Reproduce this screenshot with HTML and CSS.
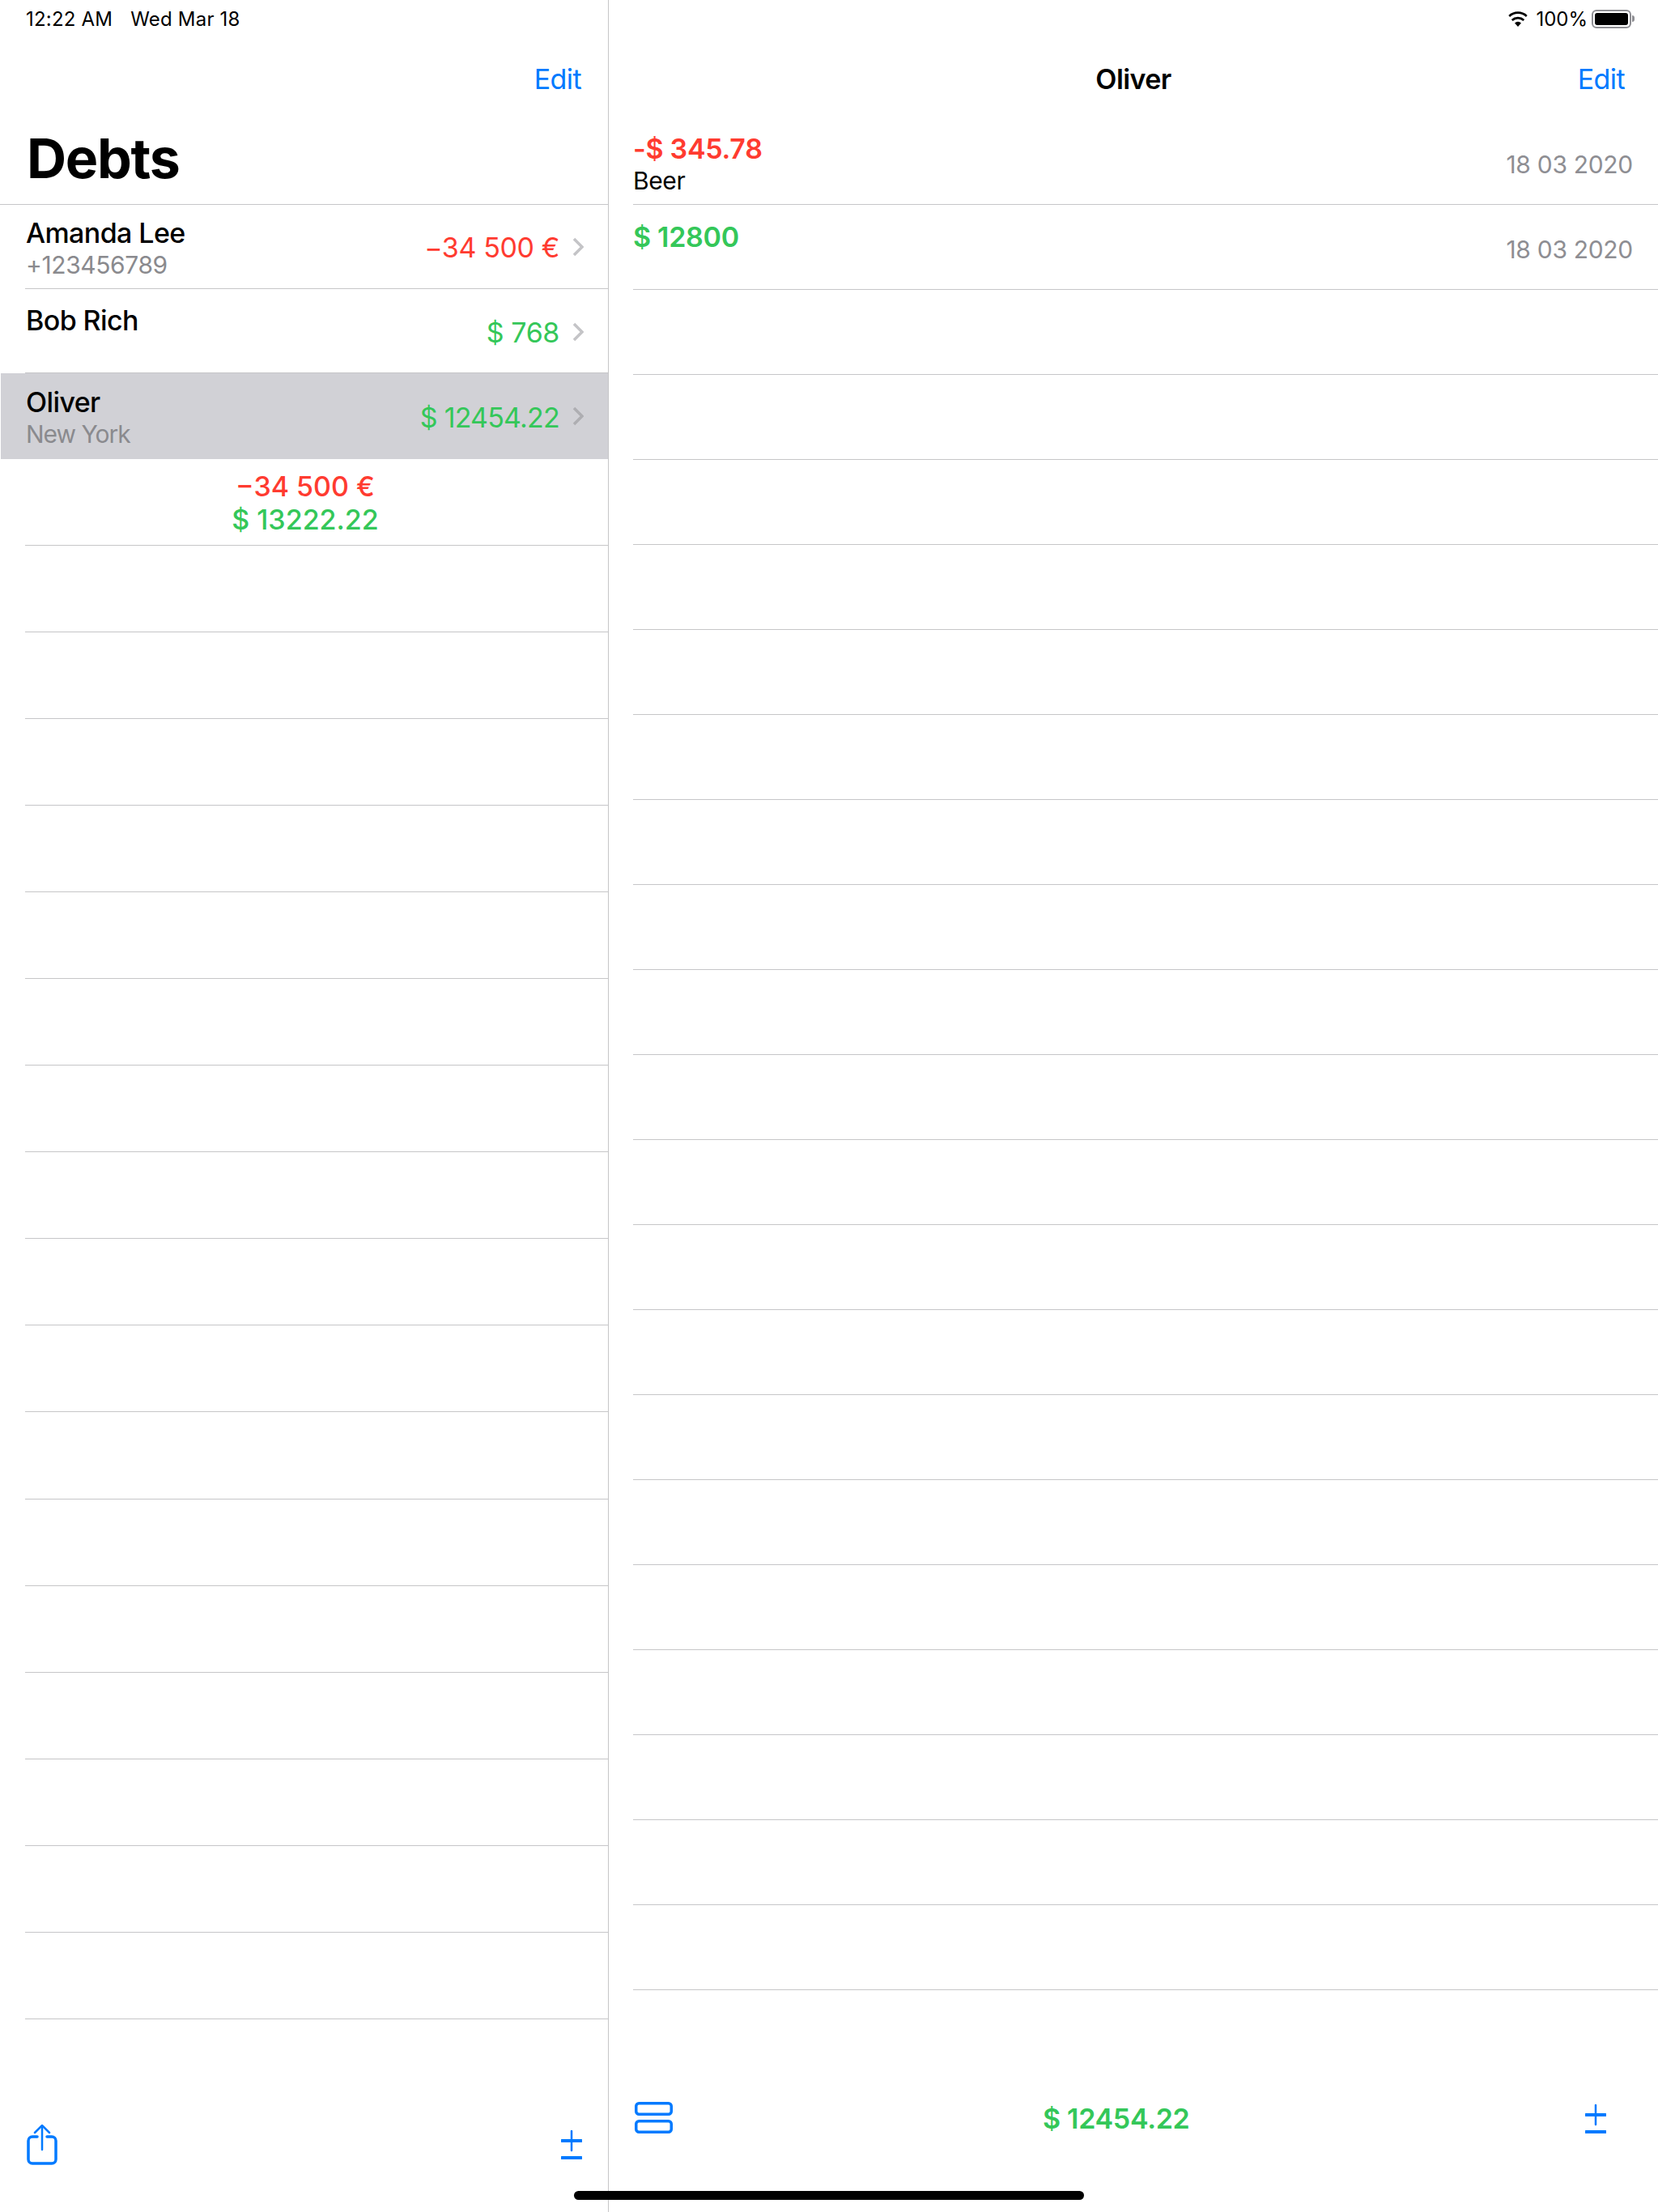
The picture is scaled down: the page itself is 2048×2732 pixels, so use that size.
FILE: index.html
```html
<!DOCTYPE html>
<html lang="en">
<head>
<meta charset="utf-8">
<title>Debts</title>
<link rel="stylesheet" href="styles.css">
</head>
<body>
<div class="app">
  <section class="pane pane-master">
    <div class="status"><span class="time">12:22 AM</span><span class="date">Wed Mar 18</span></div>
    <div class="nav nav-master"><a class="edit">Edit</a></div>
    <h1 class="title">Debts</h1>
    <div class="list list-master">
      <div class="person person-first">
        <div class="person-text"><div class="name">Amanda Lee</div><div class="sub">+123456789</div></div>
        <div class="amount red">−34 500 €</div>
        <svg class="chev" viewBox="0 0 14 24"><path d="M2 2l10 10L2 22"/></svg>
      </div>
      <div class="person person-single">
        <div class="person-text"><div class="name">Bob Rich</div></div>
        <div class="amount green">$ 768</div>
        <svg class="chev" viewBox="0 0 14 24"><path d="M2 2l10 10L2 22"/></svg>
      </div>
      <div class="person person-selected">
        <div class="person-text"><div class="name">Oliver</div><div class="sub">New York</div></div>
        <div class="amount green">$ 12454.22</div>
        <svg class="chev" viewBox="0 0 14 24"><path d="M2 2l10 10L2 22"/></svg>
      </div>
      <div class="summary"><div class="red">−34 500 €</div><div class="green">$ 13222.22</div></div>
      <div class="blank"></div><div class="blank"></div><div class="blank"></div><div class="blank"></div><div class="blank"></div><div class="blank"></div><div class="blank"></div><div class="blank"></div><div class="blank"></div><div class="blank"></div><div class="blank"></div><div class="blank"></div><div class="blank"></div><div class="blank"></div><div class="blank"></div><div class="blank"></div><div class="blank"></div>
    </div>
    <div class="toolbar toolbar-master">
      <svg class="share" viewBox="0 0 38 50"><path d="M13 15H7a5 5 0 0 0-5 5v23a5 5 0 0 0 5 5h24a5 5 0 0 0 5-5V20a5 5 0 0 0-5-5h-6"/><path class="thin" d="M19 31V2"/><path class="thin" d="M10 10l9-9 9 9"/></svg>
      <svg class="pm" viewBox="0 0 26 36"><path class="thin" d="M13 1v24"/><path d="M1 13h24M1 34h24"/></svg>
    </div>
  </section>
  <section class="pane pane-detail">
    <div class="status status-right">
      <svg class="wifi" viewBox="0 0 26 19"><path d="M13 19l-4-4.600a6 6 0 0 1 8 0z"/><path d="M13 9.500a9.500 9.500 0 0 1 6.400 2.500l1.800-2a12.300 12.300 0 0 0-16.400 0l1.800 2A9.500 9.500 0 0 1 13 9.500z"/><path d="M13 4.500a14.500 14.500 0 0 1 9.900 3.900l1.800-2a17.200 17.200 0 0 0-23.400 0l1.800 2A14.500 14.500 0 0 1 13 4.500z" transform="translate(0 -1.500)"/></svg>
      <span class="pct">100%</span>
      <div class="battery"><div class="battery-fill"></div></div><div class="battery-nub"></div>
    </div>
    <div class="nav nav-detail"><span class="nav-title">Oliver</span><a class="edit">Edit</a></div>
    <div class="list list-detail">
      <div class="entry">
        <div class="entry-text"><div class="value red">-$ 345.78</div><div class="note">Beer</div></div>
        <div class="when">18 03 2020</div>
      </div>
      <div class="entry entry-single">
        <div class="entry-text"><div class="value green">$ 12800</div></div>
        <div class="when">18 03 2020</div>
      </div>
      <div class="rule"></div><div class="rule"></div><div class="rule"></div><div class="rule"></div><div class="rule"></div><div class="rule"></div><div class="rule"></div><div class="rule"></div><div class="rule"></div><div class="rule"></div><div class="rule"></div><div class="rule"></div><div class="rule"></div><div class="rule"></div><div class="rule"></div><div class="rule"></div><div class="rule"></div><div class="rule"></div><div class="rule"></div><div class="rule"></div>
    </div>
    <div class="toolbar toolbar-detail">
      <svg class="layout" viewBox="0 0 47 40"><rect x="1.750" y="2.750" width="43.500" height="13.500" rx="3.500"/><rect x="1.750" y="24.750" width="43.500" height="13.500" rx="3.500"/></svg>
      <div class="total green">$ 12454.22</div>
      <svg class="pm" viewBox="0 0 26 36"><path class="thin" d="M13 1v24"/><path d="M1 13h24M1 34h24"/></svg>
    </div>
  </section>
  <div class="home"></div>
</div>
</body>
</html>
```
FILE: styles.css
```css
* { box-sizing: border-box; }
html, body { margin: 0; padding: 0; background: #fff; }
body { font-family: Inter, "Liberation Sans", sans-serif; color: #000; }
.app { position: relative; display: flex; width: 2048px; height: 2732px; overflow: hidden; }
.pane { display: flex; flex-direction: column; height: 100%; }
.pane-master { width: 752px; flex: none; border-right: 1px solid #c6c6c8; }
.pane-detail { flex: 1; min-width: 0; }
.red { color: #ff3b30; }
.green { color: #34c759; }

.status { height: 46px; display: flex; align-items: center; font-size: 24px; line-height: 46px; padding-left: 32px; letter-spacing: 0.2px; }
.time, .date, .pct { margin-top: 2px; }
.date { margin-left: 22px; }
.status-right { justify-content: flex-end; padding: 0 29px 0 0; }
.wifi { width: 26px; height: 19px; margin-top: 1px; fill: #000; flex: none; }
.pct { margin-left: 9px; letter-spacing: 0; }
.battery { width: 49px; height: 23px; margin-left: 5px; border: 2px solid #8e8e93; border-radius: 6px; padding: 2px; flex: none; }
.battery-fill { width: 100%; height: 100%; background: #000; border-radius: 3px; }
.battery-nub { width: 3px; height: 8px; margin-left: 1px; background: #8e8e93; border-radius: 0 3px 3px 0; }

.nav { display: flex; align-items: center; font-size: 34px; line-height: 40px; }
.edit { color: #007aff; letter-spacing: -0.6px; }
.nav-master { justify-content: flex-end; height: 104px; padding-right: 33px; }
.nav-detail { position: relative; justify-content: flex-end; padding: 2px 41px 0 0; height: 102px; }
.nav-title { position: absolute; left: 0; right: 0; top: 32px; text-align: center; font-weight: 600; letter-spacing: -0.6px; }
.title { margin: 0; height: 102px; padding-left: 33px; padding-top: 6px; font-size: 68px; line-height: 78px; font-weight: 700; letter-spacing: -1.3px; }

.person { display: flex; align-items: center; height: 105px; padding-right: 30px; position: relative; }
.person::after { content: ""; position: absolute; left: 31px; right: 0; bottom: 0; height: 1px; background: #c6c6c8; }
.person-first { border-top: 1px solid #c6c6c8; }
.person-single { height: 104px; }
.person-single .amount { margin-top: 4px; }
.person-single .chev { margin-top: 2px; }
.person-selected { height: 106px; background: #d1d1d6; margin-left: 1px; }
.person-selected::after { content: none; }
.person-text { flex: 1; min-width: 0; padding-left: 32px; align-self: flex-start; padding-top: 15px; }
.person-single .person-text { padding-top: 19px; }
.person-selected .person-text { padding-left: 31px; padding-top: 16px; }
.name { font-size: 34px; line-height: 40px; font-weight: 500; letter-spacing: -0.6px; }
.sub { font-size: 30px; line-height: 39px; color: #8a8a8e; letter-spacing: -0.4px; }
.person-selected .sub { letter-spacing: -1px; }
.amount { font-size: 34px; line-height: 40px; letter-spacing: -0.4px; margin-top: 2px; }
.person-selected .amount { letter-spacing: -0.8px; margin-top: 4px; }
.chev { width: 14px; height: 24px; margin-left: 16px; fill: none; stroke: #c4c4c7; stroke-width: 3.500; flex: none; }
.person-selected .chev { stroke: #aeaeb2; }
.summary { height: 107px; padding: 13px 28px 0 0; margin-left: 31px; text-align: center; font-size: 34px; line-height: 41px; font-weight: 500; letter-spacing: 0; border-bottom: 1px solid #c6c6c8; }
.blank { height: 107.060px; margin-left: 31px; border-bottom: 1px solid #c6c6c8; }

.list-detail { padding-left: 30px; }
.entry { display: flex; align-items: center; height: 105px; border-bottom: 1px solid #c6c6c8; padding-right: 31px; }
.entry-text { flex: 1; align-self: flex-start; padding-top: 16px; }
.entry-single .entry-text { padding-top: 20px; }
.value { font-size: 34px; line-height: 40px; font-weight: 600; letter-spacing: -0.3px; }
.note { font-size: 30px; line-height: 38px; letter-spacing: -0.4px; }
.when { font-size: 30px; line-height: 38px; color: #8e8e93; margin-top: 6px; letter-spacing: -0.3px; }
.rule { height: 105px; border-bottom: 1px solid #c6c6c8; }

.toolbar { margin-top: auto; display: flex; justify-content: space-between; }
.toolbar-master { height: 108px; padding: 0 32px 0 33px; align-items: flex-start; }
.toolbar-master .pm { margin-top: 7px; }
.toolbar-detail { position: relative; height: 137px; padding: 0 64px 0 32px; align-items: flex-start; }
.total { position: absolute; left: 536px; top: 2px; font-size: 34px; line-height: 40px; font-weight: 600; letter-spacing: -0.3px; }
.share { width: 38px; height: 50px; fill: none; stroke: #007aff; stroke-width: 3.500; stroke-linecap: round; flex: none; }
.share .thin { stroke-width: 2.500; }
.pm { width: 26px; height: 36px; margin-top: 4px; fill: none; stroke: #007aff; stroke-width: 4; stroke-linecap: round; flex: none; }
.pm .thin { stroke-width: 2.500; }
.layout { width: 47px; height: 40px; fill: none; stroke: #007aff; stroke-width: 3.500; flex: none; }
.home { position: absolute; left: 709px; top: 2706px; width: 630px; height: 11px; border-radius: 6px; background: #000; }
```
